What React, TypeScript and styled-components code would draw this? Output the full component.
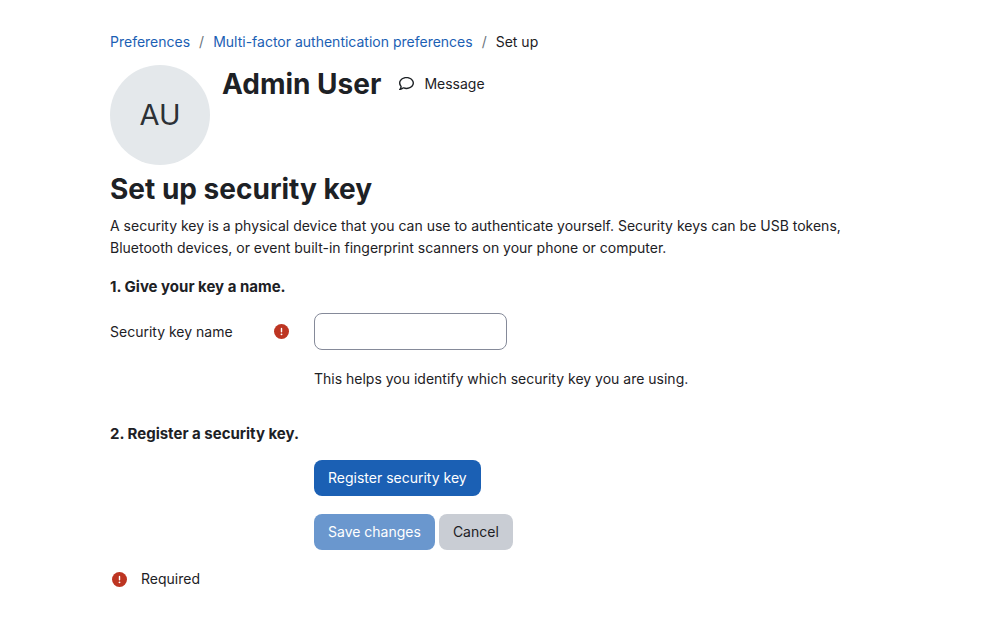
import React from "react";
import styled, { createGlobalStyle } from "styled-components";

const Global = createGlobalStyle`
  *, *::before, *::after { box-sizing: border-box; }
  body {
    margin: 0;
    background: #fff;
    color: #1d2125;
    font-family: Inter, "Liberation Sans", sans-serif;
    font-size: 14px;
    line-height: 22px;
  }
`;

const Page = styled.main`
  max-width: 830px;
  margin: 0 auto;
  padding: 31px 24px 40px 27px;
`;

const Crumbs = styled.ol`
  display: flex;
  flex-wrap: wrap;
  list-style: none;
  margin: 0;
  padding: 0;
`;

const Crumb = styled.li`
  & + &::before {
    content: "/";
    padding: 0 9px;
    color: #6a737b;
  }
`;

const Link = styled.a`
  color: #1b60b4;
  text-decoration: none;
`;

const Header = styled.header`
  display: flex;
  gap: 12px;
  margin-top: 12px;
`;

const Avatar = styled.div`
  display: flex;
  align-items: center;
  justify-content: center;
  width: 100px;
  height: 100px;
  border-radius: 50%;
  background: #e4e8eb;
  color: #2c3136;
  font-size: 29px;
`;

const NameRow = styled.div`
  display: flex;
  align-items: center;
  height: 37px;
  gap: 18px;
`;

const Title = styled.h1`
  margin: 0;
  font-size: 28px;
  line-height: 36px;
  font-weight: 700;
`;

const MessageLink = styled.a`
  display: flex;
  align-items: center;
  gap: 10px;
  color: inherit;
  text-decoration: none;
`;

const SectionTitle = styled.h2`
  margin: 6px 0 8px;
  font-size: 28px;
  line-height: 36px;
  font-weight: 700;
`;

const Text = styled.p`
  margin: 0;
`;

const Step = styled.h3`
  margin: 16px 0 15px;
  font-size: 15px;
  line-height: 23px;
  font-weight: 700;
`;

const Row = styled.div`
  display: grid;
  grid-template-columns: 179px 1fr;
  column-gap: 25px;
`;

const LabelCell = styled.div`
  display: flex;
  align-items: center;
  justify-content: space-between;
  height: 37px;
`;

const Field = styled.div`
  grid-column: 2;
`;

const Input = styled.input`
  display: block;
  width: 193px;
  height: 37px;
  padding: 6px 12px;
  border: 1px solid #858a99;
  border-radius: 8px;
  font: inherit;
`;

const Hint = styled.p`
  margin: 18px 0 16px;
`;

const Actions = styled.div`
  grid-column: 2;
  display: flex;
  gap: 4px;
  margin-bottom: 18px;
`;

const Button = styled.button<{ $secondary?: boolean }>`
  height: 36px;
  padding: 0 14px;
  border: 0;
  border-radius: 8px;
  background: ${(p) => (p.$secondary ? "#c9cdd4" : "#1b60b4")};
  color: ${(p) => (p.$secondary ? "#1d2125" : "#fff")};
  font: inherit;
  &:disabled { opacity: 0.65; }
`;

const Legend = styled.div`
  display: flex;
  align-items: center;
  gap: 14px;
  padding-left: 2px;
`;

const RequiredIcon = () => (
  <svg width="15" height="15" viewBox="0 0 512 512" role="img" aria-label="Required">
    <path fill="#bd3522" d="M256 512A256 256 0 1 0 256 0a256 256 0 1 0 0 512z" />
    <path fill="#fff" d="M256 128c13.300 0 24 10.700 24 24V264c0 13.300-10.700 24-24 24s-24-10.700-24-24V152c0-13.300 10.700-24 24-24zM224 352a32 32 0 1 1 64 0 32 32 0 1 1-64 0z" />
  </svg>
);

const CommentIcon = () => (
  <svg width="15" height="15" viewBox="0 0 512 512" aria-hidden="true">
    <path fill="#1d2125" d="M123.600 391.300c12.900-9.400 29.600-11.800 44.600-6.400c26.500 9.600 56.200 15.100 87.800 15.100c124.700 0 208-80.500 208-160s-83.300-160-208-160S48 160.500 48 240c0 32 12.400 62.800 35.700 89.200c8.600 9.700 12.800 22.500 11.800 35.500c-1.400 18.100-5.700 34.700-11.300 49.400c17-7.900 31.100-16.700 39.400-22.700zM21.200 431.900c1.800-2.700 3.500-5.400 5.100-8.100c10-16.600 19.500-38.400 21.400-62.900C17.700 326.800 0 285.100 0 240C0 125.100 114.600 32 256 32s256 93.100 256 208s-114.600 208-256 208c-37.100 0-72.300-6.400-104.100-17.900c-11.900 8.700-31.300 20.600-54.300 30.600c-15.100 6.600-32.300 12.600-50.100 16.100c-.8 .2-1.600 .3-2.400 .5c-4.400 .8-8.700 1.500-13.200 1.900c-.2 0-.5 .1-.7 .1c-5.100 .5-10.200 .8-15.300 .8c-6.500 0-12.300-3.900-14.800-9.900c-2.500-6-1.100-12.800 3.400-17.400c4.100-4.200 7.800-8.700 11.300-13.500c1.700-2.300 3.300-4.600 4.800-6.900z" />
  </svg>
);

export default function App() {
  return (
    <>
      <Global />
      <Page>
        <nav aria-label="Breadcrumb">
          <Crumbs>
            <Crumb><Link href="#preferences">Preferences</Link></Crumb>
            <Crumb><Link href="#mfa">Multi-factor authentication preferences</Link></Crumb>
            <Crumb>Set up</Crumb>
          </Crumbs>
        </nav>
        <Header>
          <Avatar>AU</Avatar>
          <NameRow>
            <Title>Admin User</Title>
            <MessageLink href="#message"><CommentIcon />Message</MessageLink>
          </NameRow>
        </Header>
        <SectionTitle>Set up security key</SectionTitle>
        <Text>
          A security key is a physical device that you can use to authenticate yourself. Security keys can be USB
          tokens, Bluetooth devices, or event built-in fingerprint scanners on your phone or computer.
        </Text>
        <form onSubmit={(e) => e.preventDefault()}>
          <Step>1. Give your key a name.</Step>
          <Row>
            <LabelCell>
              <label htmlFor="key-name">Security key name</label>
              <RequiredIcon />
            </LabelCell>
            <Field>
              <Input id="key-name" type="text" required aria-describedby="key-hint" />
              <Hint id="key-hint">This helps you identify which security key you are using.</Hint>
            </Field>
          </Row>
          <Step>2. Register a security key.</Step>
          <Row>
            <Actions><Button type="button">Register security key</Button></Actions>
            <Actions>
              <Button type="submit" disabled>Save changes</Button>
              <Button type="button" $secondary>Cancel</Button>
            </Actions>
          </Row>
        </form>
        <Legend><RequiredIcon />Required</Legend>
      </Page>
    </>
  );
}
